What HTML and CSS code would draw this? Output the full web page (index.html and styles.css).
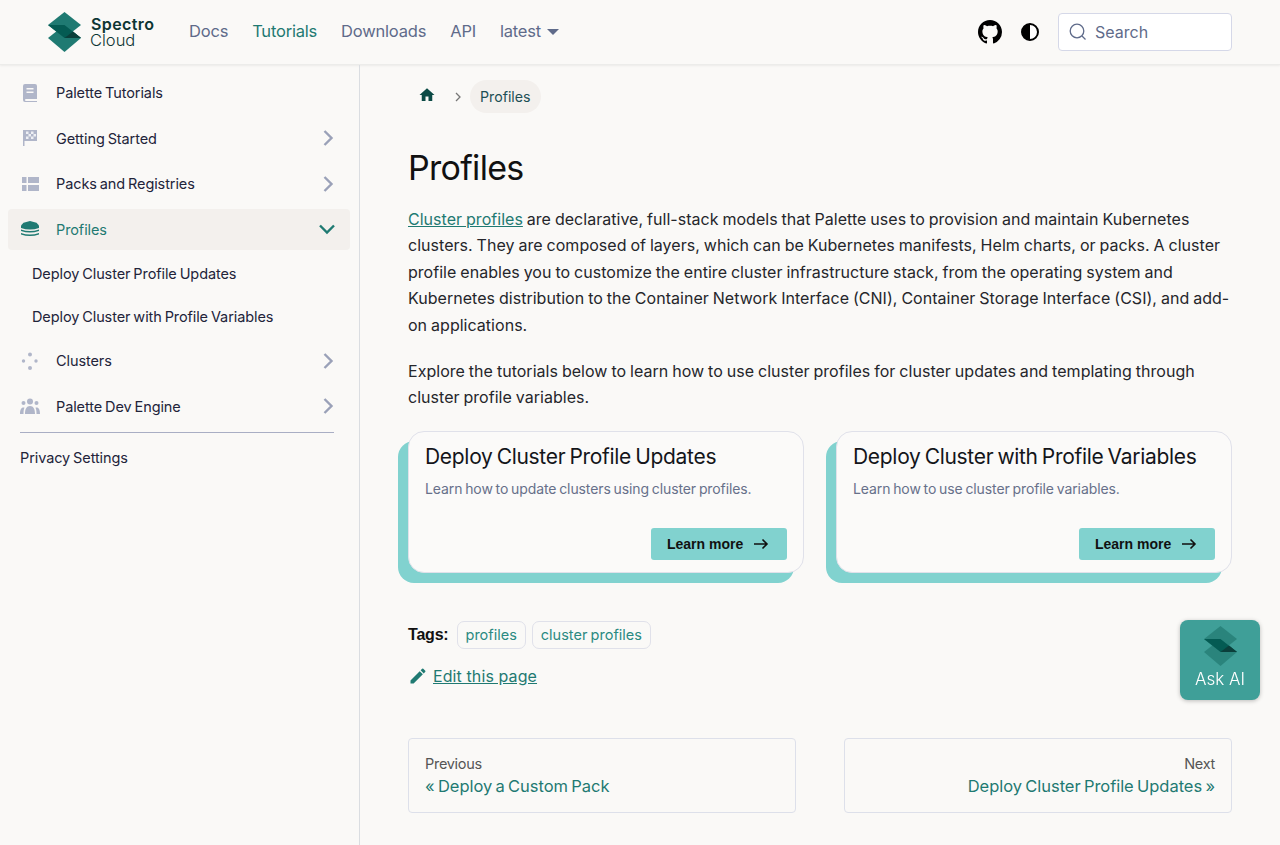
FILE: index.html
```html
<!DOCTYPE html>
<html lang="en">
<head>
    <meta charset="UTF-8">
    <meta name="viewport" content="width=device-width, initial-scale=1.0">
    <title>Profiles | Spectro Cloud</title>
    <link rel="stylesheet" href="styles.css">
</head>
<body>
    <header class="navbar">
        <a class="brand" href="#">
            <svg class="brand-mark" viewBox="0 0 33 40" width="33" height="40">
                <path d="M16.5 13 33 26 16.5 40 0 26z" fill="#1f7a72"/>
                <path d="M16.5 0 33 13 16.5 26 0 13z" fill="#1f7a72"/>
                <path d="M0 13h16.5L33 26H16.500z" fill="#045b53"/>
                <path d="M16.500 26 25 19.500 33 26z" fill="#0b3f3b"/>
            </svg>
            <span class="brand-text"><b>Spectro</b><span>Cloud</span></span>
        </a>
        <nav class="nav-links">
            <a href="#">Docs</a>
            <a href="#" class="active">Tutorials</a>
            <a href="#">Downloads</a>
            <a href="#">API</a>
            <a href="#" class="version">latest <i class="caret"></i></a>
        </nav>
        <div class="nav-right">
            <svg class="nav-icon" viewBox="0 0 16 16" width="24" height="24">
                <path fill="#000" d="M8 0C3.580 0 0 3.580 0 8c0 3.540 2.290 6.530 5.470 7.590.4.070.55-.17.55-.38 0-.19-.01-.82-.01-1.490-2.010.37-2.530-.49-2.690-.94-.09-.23-.48-.94-.82-1.130-.28-.15-.68-.52-.01-.53.63-.01 1.080.58 1.230.82.720 1.210 1.870.87 2.330.66.070-.52.28-.87.510-1.070-1.780-.2-3.640-.89-3.640-3.950 0-.87.310-1.590.820-2.150-.08-.2-.36-1.020.08-2.120 0 0 .67-.21 2.200.82.640-.18 1.320-.27 2-.27s1.360.09 2 .27c1.530-1.040 2.200-.82 2.200-.82.440 1.100.160 1.920.080 2.120.510.560.820 1.270.820 2.150 0 3.070-1.870 3.750-3.650 3.950.290.250.540.730.540 1.480 0 1.070-.01 1.930-.01 2.200 0 .210.150.460.550.380A8.010 8.010 0 0 0 16 8c0-4.420-3.580-8-8-8z"/>
            </svg>
            <svg class="nav-icon" viewBox="0 0 18 18" width="18" height="18">
                <circle cx="9" cy="9" r="8" fill="#fff" stroke="#000" stroke-width="2"/>
                <path d="M9 1a8 8 0 0 0 0 16z" fill="#000"/>
            </svg>
            <div class="search-box">
                <svg viewBox="0 0 18 18" width="18" height="18" fill="none" stroke="#5f6b8a" stroke-width="1.300">
                    <circle cx="8" cy="8" r="6.800"/>
                    <path d="m13 13 3.500 3.500"/>
                </svg>
                <span>Search</span>
            </div>
        </div>
    </header>

    <div class="page">
        <aside class="sidebar">
            <ul class="menu">
                <li class="menu-item">
                    <svg class="menu-icon" viewBox="0 0 20 18" width="20" height="18"><path d="M3 2a2 2 0 0 1 2-2h10a2 2 0 0 1 2 2v13H6a1 1 0 0 0 0 2h11v1H5a2 2 0 0 1-2-2zM6.500 4v1.500h7V4zm0 3.500V9h7V7.500z" fill="#b0b6c9" fill-rule="evenodd"/></svg>
                    <span>Palette Tutorials</span>
                </li>
                <li class="menu-item">
                    <svg class="menu-icon" viewBox="0 0 20 18" width="20" height="18"><path d="M3 1h1.500v16H3zM4.500 1h12.500v11H4.500z" fill="#b0b6c9"/><path d="M6 2.500h2.500V5H6zm5 0h2.500V5H11zM8.500 5H11v2.500H8.500zm5 0H16v2.500h-2.500zM6 7.500h2.500V10H6zm5 0h2.500V10H11z" fill="#eef0f4"/></svg>
                    <span>Getting Started</span>
                    <svg class="chevron" viewBox="0 0 12 18" width="12" height="18"><path d="m2.500 2 7 7-7 7" fill="none" stroke="#9aa1b8" stroke-width="2.400"/></svg>
                </li>
                <li class="menu-item">
                    <svg class="menu-icon" viewBox="0 0 20 14" width="20" height="14"><path d="M2 0h4.500v6H2zM8 0h11v6H8zM2 8h4.500v6H2zM8 8h11v6H8z" fill="#b0b6c9"/></svg>
                    <span>Packs and Registries</span>
                    <svg class="chevron" viewBox="0 0 12 18" width="12" height="18"><path d="m2.500 2 7 7-7 7" fill="none" stroke="#9aa1b8" stroke-width="2.400"/></svg>
                </li>
                <li class="menu-item current">
                    <svg class="menu-icon" viewBox="0 0 20 16" width="20" height="16"><path d="M10 0l6.500 1.800L19 4.500V7q-9 3-18 0V4.500l2.500-2.700z" fill="#1f7a72"/><path d="M1 8.500q9 3 18 0V10q-9 3-18 0zM1 12q9 3 18 0v1.500q-9 3-18 0z" fill="#1f7a72"/></svg>
                    <span>Profiles</span>
                    <svg class="chevron open" viewBox="0 0 18 12" width="18" height="12"><path d="m2 2.500 7 7 7-7" fill="none" stroke="#1f7a72" stroke-width="2.400"/></svg>
                </li>
                <li class="menu-sub">Deploy Cluster Profile Updates</li>
                <li class="menu-sub">Deploy Cluster with Profile Variables</li>
                <li class="menu-item">
                    <svg class="menu-icon" viewBox="0 0 18 18" width="18" height="18"><g fill="#b0b6c9"><circle cx="9" cy="2.500" r="2"/><circle cx="2.500" cy="9" r="1.700"/><circle cx="15" cy="9" r="1.700"/><circle cx="9" cy="16" r="2"/></g></svg>
                    <span>Clusters</span>
                    <svg class="chevron" viewBox="0 0 12 18" width="12" height="18"><path d="m2.500 2 7 7-7 7" fill="none" stroke="#9aa1b8" stroke-width="2.400"/></svg>
                </li>
                <li class="menu-item">
                    <svg class="menu-icon wide" viewBox="0 0 20 16" width="20" height="16"><g fill="#b0b6c9"><circle cx="10" cy="3.500" r="3"/><circle cx="3.500" cy="5" r="2"/><circle cx="16.500" cy="5" r="2"/><path d="M5 16c0-5 1.500-8 5-8s5 3 5 8zM0 16c0-4 1-6.500 3.500-6.500 .5 0 .8.100 1 .2C3.700 11 3.500 13.500 3.500 16zM20 16c0-4-1-6.500-3.500-6.500-.5 0-.8.100-1 .2.800 1.300 1 3.800 1 6.300z"/></g></svg>
                    <span>Palette Dev Engine</span>
                    <svg class="chevron" viewBox="0 0 12 18" width="12" height="18"><path d="m2.500 2 7 7-7 7" fill="none" stroke="#9aa1b8" stroke-width="2.400"/></svg>
                </li>
            </ul>
            <div class="privacy">Privacy Settings</div>
        </aside>

        <main class="content">
            <div class="breadcrumbs">
                <svg class="home" viewBox="0 0 24 24" width="18" height="18"><path d="M10 20v-6h4v6h5v-8h3L12 3 2 12h3v8z" fill="#0b4a45"/></svg>
                <svg class="crumb-sep" viewBox="0 0 8 12" width="8" height="12"><path d="m2 2 4 4-4 4" fill="none" stroke="#777" stroke-width="1.300"/></svg>
                <span class="crumb">Profiles</span>
            </div>
            <h1>Profiles</h1>
            <p><a href="#" class="link">Cluster profiles</a> are declarative, full-stack models that Palette uses to provision and maintain Kubernetes clusters. They are composed of layers, which can be Kubernetes manifests, Helm charts, or packs. A cluster profile enables you to customize the entire cluster infrastructure stack, from the operating system and Kubernetes distribution to the Container Network Interface (CNI), Container Storage Interface (CSI), and add-on applications.</p>
            <p>Explore the tutorials below to learn how to use cluster profiles for cluster updates and templating through cluster profile variables.</p>

            <div class="cards">
                <div class="card">
                    <h3>Deploy Cluster Profile Updates</h3>
                    <div class="card-text">Learn how to update clusters using cluster profiles.</div>
                    <a class="learn" href="#">Learn more
                        <svg viewBox="0 0 16 12" width="16" height="12"><path d="M1 6h13M9.500 1.500 14 6l-4.500 4.500" fill="none" stroke="#111" stroke-width="1.600"/></svg>
                    </a>
                </div>
                <div class="card">
                    <h3>Deploy Cluster with Profile Variables</h3>
                    <div class="card-text">Learn how to use cluster profile variables.</div>
                    <a class="learn" href="#">Learn more
                        <svg viewBox="0 0 16 12" width="16" height="12"><path d="M1 6h13M9.500 1.500 14 6l-4.500 4.500" fill="none" stroke="#111" stroke-width="1.600"/></svg>
                    </a>
                </div>
            </div>

            <div class="tags">
                <b>Tags:</b>
                <a href="#" class="tag">profiles</a>
                <a href="#" class="tag">cluster profiles</a>
            </div>
            <div class="edit">
                <svg viewBox="0 0 24 24" width="20" height="20"><path d="M3 17.250V21h3.750L17.810 9.940l-3.750-3.750zM20.710 7.040a1 1 0 0 0 0-1.410l-2.340-2.340a1 1 0 0 0-1.410 0l-1.830 1.830 3.750 3.750z" fill="#1f7a72"/></svg>
                <a href="#" class="link">Edit this page</a>
            </div>

            <div class="pager">
                <a href="#" class="pager-link">
                    <small>Previous</small>
                    <span>« Deploy a Custom Pack</span>
                </a>
                <a href="#" class="pager-link next">
                    <small>Next</small>
                    <span>Deploy Cluster Profile Updates »</span>
                </a>
            </div>
        </main>
    </div>

    <button class="ask-ai">
        <svg viewBox="0 0 33 40" width="33" height="40">
            <path d="M16.500 13 33 26 16.500 40 0 26z" fill="#2a847c"/>
            <path d="M16.500 0 33 13 16.500 26 0 13z" fill="#2a847c"/>
            <path d="M0 13h16.500L33 26H16.500z" fill="#045b53"/>
            <path d="M16.500 26 25 19.500 33 26z" fill="#0b3f3b"/>
        </svg>
        <span>Ask AI</span>
    </button>
</body>
</html>
```

FILE: styles.css
```css
* {
    box-sizing: border-box;
}
body {
    margin: 0;
    height: 845px;
    overflow: hidden;
    font-family: Inter, "Liberation Sans", sans-serif;
    font-size: 16px;
    color: #1c1e21;
    background-color: #faf9f7;
}
a {
    text-decoration: none;
    color: inherit;
}

/* top bar */
.navbar {
    display: flex;
    align-items: center;
    height: 65px;
    padding: 0 48px;
    border-bottom: 1px solid #ececea;
    box-shadow: 0 1px 2px rgba(0, 0, 0, 0.06);
}
.brand {
    display: flex;
    align-items: center;
    gap: 9px;
    width: 141px;
}
.brand-text {
    display: flex;
    flex-direction: column;
    color: #0d3533;
    font-size: 16px;
    line-height: 16px;
}
.brand-text b {
    margin-left: 1px;
    font-weight: 600;
    letter-spacing: 0.4px;
}
.brand-text span {
    font-size: 16.500px;
    font-weight: 300;
}
.nav-links {
    display: flex;
    align-items: center;
    gap: 24px;
    margin-bottom: 2px;
    color: #5f6b8a;
    font-size: 16.500px;
    letter-spacing: -0.2px;
}
.nav-links .active {
    color: #1f7a72;
}
.caret {
    display: inline-block;
    margin-left: 2px;
    vertical-align: 2px;
    border-top: 6px solid #5f6b8a;
    border-left: 6px solid transparent;
    border-right: 6px solid transparent;
}
.nav-right {
    display: flex;
    align-items: center;
    margin-left: auto;
}
.nav-icon {
    margin-right: 19px;
}
.search-box {
    display: flex;
    align-items: center;
    gap: 8px;
    width: 174px;
    height: 38px;
    padding-left: 10px;
    border: 1px solid #d5d8e8;
    border-radius: 4px;
    background: #fff;
    color: #5f6b8a;
    font-size: 16px;
}

/* layout */
.page {
    display: flex;
    height: 780px;
}
.sidebar {
    flex: 0 0 360px;
    padding: 7px 9px 0 8px;
    border-right: 1px solid #dadde1;
    font-size: 14.500px;
    letter-spacing: -0.1px;
    word-spacing: -1px;
    color: #22243a;
}
.menu {
    list-style: none;
    margin: 0;
    padding: 0 0 4.500px;
    display: flex;
    flex-direction: column;
    gap: 4px;
}
.menu-item {
    display: flex;
    align-items: center;
    height: 41.500px;
    padding-left: 12px;
    padding-right: 16px;
    border-radius: 4px;
}
.menu-item.current {
    background-color: #f3f0ed;
    color: #1f7a72;
}
.menu-icon {
    flex: 0 0 auto;
    width: 20px;
    margin-right: 16px;
}
.chevron {
    margin-left: auto;
}
.chevron.open {
    margin-right: -2px;
}
.menu-sub {
    display: flex;
    align-items: center;
    height: 39px;
    padding-left: 24px;
}
.privacy {
    margin: 0 16px 0 12px;
    padding-top: 15px;
    border-top: 1px solid #a9aec4;
    line-height: 20px;
}

/* main column */
.content {
    flex: 1;
    padding: 15px 48px 0;
    line-height: 26.400px;
    color: #25262b;
}
.breadcrumbs {
    display: flex;
    align-items: center;
    height: 33px;
    padding-left: 10px;
}
.home {
    margin-bottom: 3px;
}
.crumb-sep {
    margin-left: 18px;
    margin-right: 8px;
}
.crumb {
    padding: 0 10px;
    border-radius: 17px;
    background-color: #f3f0ed;
    font-size: 14.200px;
    line-height: 33px;
    color: #1d4f55;
}
h1 {
    margin: 33px 0 16px;
    font-size: 34px;
    font-weight: 400;
    line-height: 44px;
    letter-spacing: -0.7px;
    color: #111;
}
p {
    margin: 0 0 20px;
    letter-spacing: 0.03px;
    word-spacing: -0.6px;
}
.link {
    color: #1f7a72;
    text-decoration: underline;
}
.cards {
    display: grid;
    grid-template-columns: 396px 396px;
    gap: 32px;
    margin-top: 20px;
}
.card {
    display: flex;
    flex-direction: column;
    height: 142px;
    padding: 12px 16px 12px 16px;
    border: 1px solid #e0e1ea;
    border-radius: 16px;
    background: #fbfaf9;
    box-shadow: -10px 10px 0 0 #81d2cf;
}
.card h3 {
    margin: 0;
    font-size: 21px;
    font-weight: 400;
    line-height: 26px;
    letter-spacing: -0.3px;
    word-spacing: -1.500px;
    color: #14151a;
}
.card-text {
    margin-top: 7px;
    font-size: 14px;
    line-height: 24px;
    letter-spacing: -0.1px;
    word-spacing: -1px;
    color: #67708a;
}
.learn {
    display: flex;
    align-items: center;
    gap: 9.500px;
    align-self: flex-end;
    width: 136px;
    height: 32px;
    margin-top: auto;
    padding-left: 16px;
    border-radius: 3px;
    background-color: #81d2cf;
    font-family: "Liberation Sans", sans-serif;
    font-size: 14px;
    font-weight: 700;
    color: #111;
}
.tags {
    display: flex;
    align-items: center;
    gap: 6px;
    margin-top: 48px;
}
.tags b {
    margin-right: 2px;
    font-family: "Liberation Sans", sans-serif;
    letter-spacing: -0.2px;
    color: #111;
}
.tag {
    height: 28px;
    padding: 0 8px;
    border: 1px solid #e0e1ea;
    border-radius: 7px;
    font-size: 14.500px;
    line-height: 26px;
    word-spacing: -0.8px;
    color: #2b8a82;
}
.edit {
    display: flex;
    align-items: center;
    gap: 5px;
    margin-top: 14px;
    letter-spacing: 0.1px;
}
.pager {
    display: grid;
    grid-template-columns: 388px 388px;
    gap: 48px;
    margin-top: 49px;
}
.pager-link {
    display: flex;
    flex-direction: column;
    height: 75px;
    padding: 14px 16px;
    border: 1px solid #dde0ea;
    border-radius: 4px;
}
.pager-link.next {
    text-align: right;
}
.pager-link small {
    font-size: 14.500px;
    line-height: 21px;
    letter-spacing: -0.3px;
    color: #555;
}
.pager-link span {
    font-size: 16.500px;
    line-height: 24px;
    letter-spacing: -0.05px;
    word-spacing: -1.200px;
    color: #1f7a72;
}

/* floating button */
.ask-ai {
    position: fixed;
    left: 1180px;
    top: 620px;
    display: flex;
    flex-direction: column;
    align-items: center;
    gap: 3px;
    width: 80px;
    height: 80px;
    padding: 6px 0 0;
    border: 0;
    border-radius: 8px;
    background-color: #3f9f98;
    box-shadow: 0 1px 4px rgba(0, 0, 0, 0.25);
    color: #fff;
    font-family: Inter, sans-serif;
    font-size: 17px;
    font-weight: 300;
}
```
